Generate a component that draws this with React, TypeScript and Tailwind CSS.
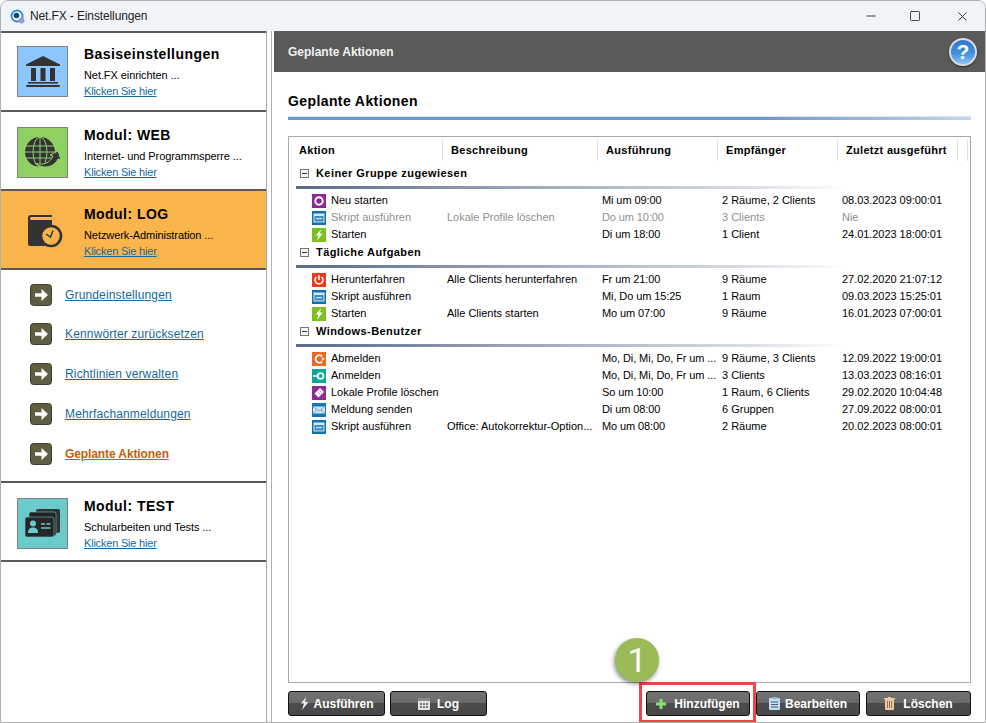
import React from "react";
import { Minus, Square, X } from "lucide-react";

type Row = { icon: string; name: string; desc?: string; exec: string; recv: string; last: string; muted?: boolean };

const groups: { title: string; rows: Row[] }[] = [
  {
    title: "Keiner Gruppe zugewiesen",
    rows: [
      { icon: "restart", name: "Neu starten", exec: "Mi um 09:00", recv: "2 Räume, 2 Clients", last: "08.03.2023 09:00:01" },
      { icon: "script", name: "Skript ausführen", desc: "Lokale Profile löschen", exec: "Do um 10:00", recv: "3 Clients", last: "Nie", muted: true },
      { icon: "start", name: "Starten", exec: "Di um 18:00", recv: "1 Client", last: "24.01.2023 18:00:01" },
    ],
  },
  {
    title: "Tägliche Aufgaben",
    rows: [
      { icon: "shutdown", name: "Herunterfahren", desc: "Alle Clients herunterfahren", exec: "Fr um 21:00", recv: "9 Räume", last: "27.02.2020 21:07:12" },
      { icon: "script", name: "Skript ausführen", exec: "Mi, Do um 15:25", recv: "1 Raum", last: "09.03.2023 15:25:01" },
      { icon: "start", name: "Starten", desc: "Alle Clients starten", exec: "Mo um 07:00", recv: "9 Räume", last: "16.01.2023 07:00:01" },
    ],
  },
  {
    title: "Windows-Benutzer",
    rows: [
      { icon: "logout", name: "Abmelden", exec: "Mo, Di, Mi, Do, Fr um ...", recv: "9 Räume, 3 Clients", last: "12.09.2022 19:00:01" },
      { icon: "login", name: "Anmelden", exec: "Mo, Di, Mi, Do, Fr um ...", recv: "3 Clients", last: "13.03.2023 08:16:01" },
      { icon: "erase", name: "Lokale Profile löschen", exec: "So um 10:00", recv: "1 Raum, 6 Clients", last: "29.02.2020 10:04:48" },
      { icon: "mail", name: "Meldung senden", exec: "Di um 08:00", recv: "6 Gruppen", last: "27.09.2022 08:00:01" },
      { icon: "script", name: "Skript ausführen", desc: "Office: Autokorrektur-Option...", exec: "Mo um 08:00", recv: "2 Räume", last: "20.02.2023 08:00:01" },
    ],
  },
];

const subLinks = ["Grundeinstellungen", "Kennwörter zurücksetzen", "Richtlinien verwalten", "Mehrfachanmeldungen"];

const RowIcon = ({ type }: { type: string }) => {
  const bg: Record<string, string> = {
    restart: "#8e2a94",
    script: "#0f72b0",
    start: "#7cc01e",
    shutdown: "#ee3a1c",
    logout: "#f26522",
    login: "#0aa89a",
    erase: "#8e2a94",
    mail: "#1877b5",
  };
  return (
    <svg width="14" height="14" viewBox="0 0 14 14" className="shrink-0">
      <rect width="14" height="14" fill={bg[type]} />
      {type === "restart" && <circle cx="7" cy="7" r="3.7" fill="none" stroke="#fff" strokeWidth="2" />}
      {type === "script" && (
        <>
          <rect x="1.5" y="2.5" width="11" height="9" fill="#d8e8f3" />
          <rect x="2.5" y="5" width="9" height="5.5" fill="#3f8abd" />
          <rect x="4" y="7" width="6" height="1.2" fill="#cfe2f0" />
        </>
      )}
      {type === "start" && <path d="M9.500 1 3.500 7.500h3L5 13l5.500-7.500H7.500Z" fill="#fff" />}
      {type === "shutdown" && (
        <>
          <path d="M4.400 4a4 4 0 1 0 5.200 0" fill="none" stroke="#fff" strokeWidth="1.6" />
          <path d="M7 2v5" stroke="#fff" strokeWidth="1.6" />
        </>
      )}
      {type === "logout" && (
        <>
          <path d="M10 4.200a3.800 3.800 0 1 0 0 5.600" fill="none" stroke="#fff" strokeWidth="1.900" />
          <path d="M7 7h3V5l3 2-3 2V7" fill="#fff" />
        </>
      )}
      {type === "login" && (
        <>
          <circle cx="8.600" cy="7" r="2.900" fill="none" stroke="#fff" strokeWidth="1.800" />
          <path d="M1 7h5" stroke="#fff" strokeWidth="1.600" />
        </>
      )}
      {type === "erase" && (
        <>
          <path d="M8 2 12 6 6.500 11.500 2.500 7.500Z" fill="#fff" />
          <path d="M5 5 9 9M6.500 3.500l4 4" stroke="#b98cc0" strokeWidth="0.800" />
        </>
      )}
      {type === "mail" && (
        <>
          <rect x="1" y="3.500" width="12" height="7" fill="#cfe3f2" />
          <path d="M1 3.500 7 8l6-4.500M1 10.500l4.400-4M13 10.500l-4.400-4" fill="none" stroke="#6ba6d0" strokeWidth="0.900" />
        </>
      )}
    </svg>
  );
};

const BankIcon = () => (
  <svg width="34" height="31" viewBox="0 0 34 31">
    <path d="M17 0 34 8.500V10H0V8.500Z" fill="#333" />
    <rect x="5" y="12" width="5" height="13" fill="#333" />
    <rect x="14.500" y="12" width="5" height="13" fill="#333" />
    <rect x="24" y="12" width="5" height="13" fill="#333" />
    <rect x="2" y="26" width="30" height="1.600" fill="#333" />
    <rect x="0" y="29" width="34" height="2" rx="1" fill="#333" />
  </svg>
);

const GlobeIcon = () => (
  <svg width="36" height="33" viewBox="0 0 36 33" className="ml-[1px]">
    <circle cx="15" cy="16" r="15" fill="#333" />
    <ellipse cx="15" cy="16" rx="7" ry="15" fill="none" stroke="#92d06a" strokeWidth="1" />
    <path d="M15 1v30M1 10h28M0 16h30M1 22h28" stroke="#92d06a" strokeWidth="1" />
    <path d="M10 27c8 3 15 0 18-7l-3-1 8-4 3 9-3-1c-4 8-14 11-23 4Z" fill="#333" stroke="#92d06a" strokeWidth="1" />
  </svg>
);

const LogIcon = () => (
  <svg width="35" height="33" viewBox="0 0 35 33" className="ml-[5px] shrink-0">
    <path d="M3 0h21v2H3.500a1.500 1.500 0 0 0 0 3H24v7a11 11 0 0 0-7 19H2a2 2 0 0 1-2-2V3a3 3 0 0 1 3-3Z" fill="#333" />
    <circle cx="23" cy="21" r="10" fill="#f9b54c" stroke="#333" strokeWidth="2.600" />
    <path d="M25 15.500 22.500 22 18 19" fill="none" stroke="#333" strokeWidth="1.500" />
  </svg>
);

const CardsIcon = () => (
  <svg width="35" height="29" viewBox="0 0 35 29">
    <rect x="11" y="0" width="24" height="24" rx="2" fill="#333" />
    <rect x="4" y="3" width="27" height="24" rx="2" fill="#222" stroke="#6bcbcb" strokeWidth="0.600" />
    <rect x="0" y="8" width="29" height="20" rx="2" fill="#262626" stroke="#6bcbcb" strokeWidth="0.600" />
    <circle cx="8" cy="14.500" r="3" fill="#6bcbcb" />
    <path d="M3 24c0-4 2-5.500 5-5.500s5 1.500 5 5.500Z" fill="#6bcbcb" />
    <path d="M16 15h4M21.500 15h4M16 19h9.500" stroke="#6bcbcb" strokeWidth="1.300" />
  </svg>
);

const ArrowBox = () => (
  <svg width="22" height="22" viewBox="0 0 22 22" className="shrink-0">
    <rect x="0.500" y="0.500" width="21" height="21" rx="3" fill="#5f5d42" stroke="#3c3c30" />
    <path d="M5 9.300h6.500V5l6.500 6-6.500 6v-4.300H5Z" fill="#fff" />
  </svg>
);

const ModuleItem = ({
  title,
  desc,
  icon,
  tile,
  first,
  active,
}: {
  title: string;
  desc: string;
  icon: React.ReactNode;
  tile?: string;
  first?: boolean;
  active?: boolean;
}) => (
  <div className={`flex h-[77px] pl-[16px] ${first ? "pt-[13px]" : "pt-[15px]"} ${active ? "bg-[#f9b54c]" : "bg-white"}`}>
    <div
      className={`flex h-[51px] w-[51px] shrink-0 items-center justify-center ${tile ? "border border-[#808080]" : ""}`}
      style={tile ? { backgroundColor: tile } : undefined}
    >
      {icon}
    </div>
    <div className="ml-[16px] -mt-[1px] min-w-0">
      <div className="h-[18px] text-[14px] leading-[18px] font-bold tracking-[0.45px] text-black">{title}</div>
      <div className="mt-[5px] h-[14px] text-[11px] leading-[14px] tracking-[-0.08px] whitespace-nowrap text-black">{desc}</div>
      <div className="mt-[2px] h-[14px] text-[11px] leading-[14px] tracking-[-0.2px] text-[#13689f] underline">Klicken Sie hier</div>
    </div>
  </div>
);

const ActionButton = ({ label, width, icon, gap }: { label: string; width: string; icon: React.ReactNode; gap: string }) => (
  <button
    className={`flex h-[25px] items-center justify-center rounded-[3px] border border-[#111] bg-[linear-gradient(#727272_0%,#6a6a6a_48%,#4c4c4c_50%,#484848_100%)] text-[12px] font-bold text-white ${width} ${gap}`}
  >
    {icon}
    {label}
  </button>
);

export default function App() {
  return (
    <div className="relative flex h-[723px] w-[986px] flex-col overflow-hidden rounded-t-[8px] border border-[#b0b0b0] bg-white font-['Liberation_Sans',Arial,sans-serif]">
      {/* Title bar */}
      <div className="flex h-[30px] shrink-0 items-center bg-[#eff4f9] pl-[9px]">
        <svg width="15" height="15" viewBox="0 0 15 15">
          <circle cx="7" cy="7" r="6.500" fill="#2f8fd8" />
          <circle cx="7" cy="7" r="4.500" fill="#fff" />
          <circle cx="6.500" cy="6.500" r="2.800" fill="#12457f" />
          <circle cx="11.500" cy="11.500" r="3" fill="#9a9ad6" />
        </svg>
        <span className="ml-[5px] text-[12px] tracking-[-0.12px] text-[#222]">Net.FX - Einstellungen</span>
        <div className="ml-auto flex items-center text-[#111]">
          <Minus size={14} strokeWidth={1.400} className="mr-[31px]" />
          <Square size={12} strokeWidth={1.500} className="mr-[34px]" />
          <X size={15} strokeWidth={1.300} className="mr-[15px]" />
        </div>
      </div>

      <div className="flex min-h-0 flex-1">
        {/* Sidebar */}
        <div className="w-[266px] shrink-0 border-r border-r-[#a8a8a8]">
          <div className="border-y-2 border-y-[#5a5a5a]">
            <ModuleItem first title="Basiseinstellungen" desc="Net.FX einrichten ..." tile="#8cc7ff" icon={<BankIcon />} />
          </div>
          <ModuleItem title="Modul: WEB" desc="Internet- und Programmsperre ..." tile="#90d164" icon={<GlobeIcon />} />
          <div className="border-y-2 border-y-[#5a5a5a]">
            <ModuleItem active title="Modul: LOG" desc="Netzwerk-Administration ..." icon={<LogIcon />} />
          </div>
          <div className="h-[211px] pt-[14px] pl-[29px]">
            {subLinks.map((link) => (
              <div key={link} className="mb-[18px] flex h-[22px] items-center first:mb-[17px]">
                <ArrowBox />
                <a className="ml-[13px] text-[12px] tracking-[0.15px] whitespace-nowrap text-[#13689f] underline">{link}</a>
              </div>
            ))}
            <div className="flex h-[22px] items-center">
              <ArrowBox />
              <a className="ml-[13px] text-[12px] font-bold tracking-[-0.1px] whitespace-nowrap text-[#c0600f] underline">
                Geplante Aktionen
              </a>
            </div>
          </div>
          <div className="border-y-2 border-y-[#5a5a5a]">
            <ModuleItem title="Modul: TEST" desc="Schularbeiten und Tests ..." tile="#6bcbcb" icon={<CardsIcon />} />
          </div>
        </div>

        <div className="w-[4px] shrink-0" />
        <div className="w-[1px] shrink-0 bg-[#b0b0b0]" />
        <div className="w-[2px] shrink-0" />

        {/* Main */}
        <div className="flex min-w-0 flex-1 flex-col">
          <div className="flex h-[41px] shrink-0 items-center justify-between bg-[#5a5a5a] pr-[8px] pl-[14px]">
            <span className="text-[12px] font-bold text-[#f2f2f2]">Geplante Aktionen</span>
            <div className="flex h-[28px] w-[28px] items-center justify-center rounded-full border-[2px] border-[#dcdcdc] bg-[linear-gradient(#2f78d0,#3f8fe0_55%,#8cc4f4)] text-[21px] leading-none font-bold text-white shadow-[0_1px_2px_rgba(0,0,0,0.5)]">
              ?
            </div>
          </div>

          <div className="flex min-h-0 flex-1 flex-col px-[14px]">
            <div className="mt-[20px] h-[18px] text-[14px] leading-[18px] font-bold tracking-[0.4px] text-black">Geplante Aktionen</div>
            <div className="mt-[6px] h-[4px] shrink-0 border-t border-t-[#dde6f1] bg-[linear-gradient(to_right,#7098c8,#7098c8_70%,#c5d6ea)]" />

            {/* Table */}
            <div className="mt-[16px] min-h-0 flex-1 border border-[#aaaaaa]">
              <div className="grid h-[27px] grid-cols-[154px_155px_120px_120px_120px_10px] pt-[2px] text-[11px] font-bold tracking-[0.3px] text-black">
                {["Aktion", "Beschreibung", "Ausführung", "Empfänger", "Zuletzt ausgeführt", ""].map((h, i) => (
                  <div
                    key={h}
                    className={`flex h-[22px] items-center border-r border-r-[#e2e2e2] ${i === 0 ? "pl-[10px]" : "pl-[8px]"}`}
                  >
                    {h}
                  </div>
                ))}
              </div>
              {groups.map((g) => (
                <div key={g.title}>
                  <div className="flex h-[18px] items-center pl-[11px]">
                    <div className="relative h-[9px] w-[9px] border border-[#777] bg-[#f4f4f4]">
                      <div className="absolute top-[3px] left-[1px] h-[1px] w-[5px] bg-[#333]" />
                    </div>
                    <span className="ml-[7px] text-[11px] font-bold tracking-[0.42px] text-black">{g.title}</span>
                  </div>
                  <div className="mt-[4px] mb-[3px] ml-[7px] h-[3px] w-[552px] bg-[linear-gradient(to_right,#5b6b88,#a9b3c4_50%,#d5dae2_80%,#ffffff)]" />
                  {g.rows.map((r) => (
                    <div
                      key={r.name + r.exec}
                      className={`grid h-[17px] grid-cols-[135px_155px_120px_120px_1fr] items-center pl-[23px] text-[11px] whitespace-nowrap ${
                        r.muted ? "text-[#8f8f8f]" : "text-black"
                      }`}
                    >
                      <div className="flex items-center">
                        <RowIcon type={r.icon} />
                        <span className="ml-[5px]">{r.name}</span>
                      </div>
                      <div>{r.desc}</div>
                      <div className="tracking-[-0.1px]">{r.exec}</div>
                      <div>{r.recv}</div>
                      <div className="tracking-[-0.05px]">{r.last}</div>
                    </div>
                  ))}
                </div>
              ))}
            </div>

            {/* Buttons */}
            <div className="mt-[8px] mb-[6px] flex h-[25px] shrink-0">
              <ActionButton
                label="Ausführen"
                width="w-[97px]"
                gap="gap-[5px]"
                icon={
                  <svg width="9" height="13" viewBox="0 0 9 13">
                    <path d="M6 0 1 6.500h3L2 13l6.500-8H5Z" fill="#eee" />
                  </svg>
                }
              />
              <ActionButton
                label="Log"
                width="ml-[5px] w-[97px]"
                gap="gap-[7px]"
                icon={
                  <svg width="12" height="12" viewBox="0 0 12 12">
                    <rect width="12" height="12" rx="1" fill="#e4e4e4" />
                    <rect x="0" y="0" width="12" height="3" fill="#8a8a8a" />
                    <path d="M2 5h2v2H2zM5 5h2v2H5zM8 5h2v2H8zM2 8h2v2H2zM5 8h2v2H5zM8 8h2v2H8z" fill="#777" />
                  </svg>
                }
              />
              <ActionButton
                label="Hinzufügen"
                width="ml-auto w-[104px]"
                gap="gap-[8px]"
                icon={
                  <svg width="10" height="10" viewBox="0 0 10 10">
                    <path d="M3.500 0h3v3.500H10v3H6.500V10h-3V6.500H0v-3h3.500Z" fill="#86e070" />
                  </svg>
                }
              />
              <ActionButton
                label="Bearbeiten"
                width="ml-[6px] w-[104px]"
                gap="gap-[5px]"
                icon={
                  <svg width="11" height="13" viewBox="0 0 11 13">
                    <rect y="1" width="11" height="12" rx="1" fill="#bfe0f2" />
                    <rect x="3" width="5" height="2" fill="#8fb7cc" />
                    <path d="M2 5h7M2 7.500h7M2 10h7" stroke="#557" strokeWidth="1" />
                  </svg>
                }
              />
              <ActionButton
                label="Löschen"
                width="ml-[6px] w-[105px]"
                gap="gap-[8px]"
                icon={
                  <svg width="11" height="13" viewBox="0 0 11 13">
                    <rect x="1" y="2" width="9" height="11" rx="1" fill="#e8c9a0" />
                    <rect x="0" y="1" width="11" height="1.500" fill="#e8c9a0" />
                    <rect x="4" y="0" width="3" height="1" fill="#e8c9a0" />
                    <path d="M3.500 4v7M5.500 4v7M7.500 4v7" stroke="#8a6d4a" strokeWidth="0.900" />
                  </svg>
                }
              />
            </div>
          </div>
        </div>
      </div>

      {/* Callout over the add button */}
      <div className="absolute top-[681px] left-[638px] h-[41px] w-[117px] border-[3px] border-[#f2424a]" />
      <div className="absolute top-[637px] left-[614px] flex h-[44px] w-[44px] items-center justify-center rounded-full bg-[#9bbb59] font-['Roboto'] text-[34px] text-white shadow-[-1px_2px_4px_rgba(0,0,0,0.45)]">
        1
      </div>
    </div>
  );
}
